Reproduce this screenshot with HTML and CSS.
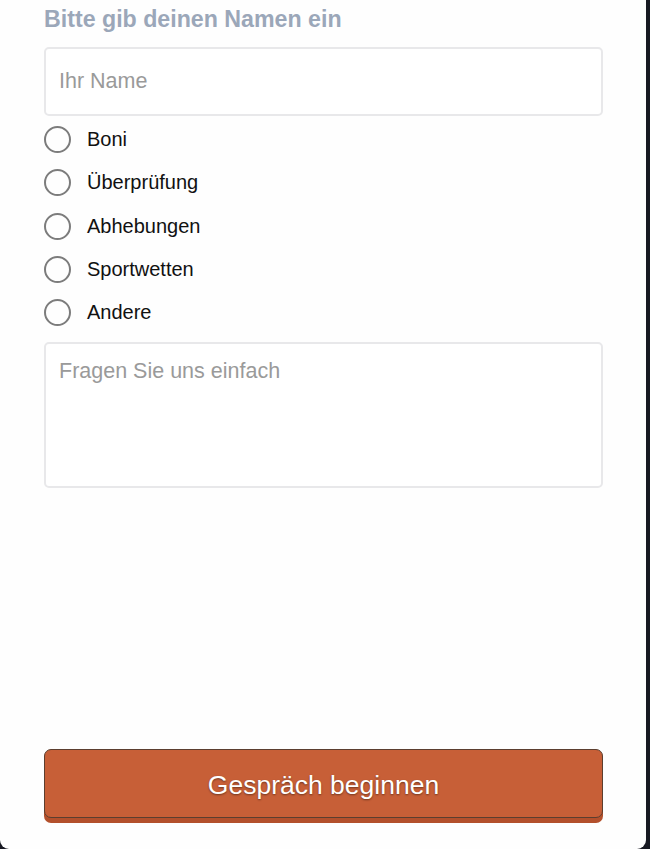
FILE: index.html
```html
<!DOCTYPE html>
<html lang="de">
<head>
<meta charset="utf-8">
<link rel="stylesheet" href="styles.css">
</head>
<body>
<div class="panel">
  <h2 class="title">Bitte gib deinen Namen ein</h2>
  <div class="field name-field"><span class="placeholder">Ihr Name</span></div>
  <ul class="options">
    <li class="option"><span class="radio"></span><span class="label">Boni</span></li>
    <li class="option"><span class="radio"></span><span class="label">Überprüfung</span></li>
    <li class="option"><span class="radio"></span><span class="label">Abhebungen</span></li>
    <li class="option"><span class="radio"></span><span class="label">Sportwetten</span></li>
    <li class="option"><span class="radio"></span><span class="label">Andere</span></li>
  </ul>
  <div class="field message-field"><span class="placeholder">Fragen Sie uns einfach</span></div>
  <button class="start">Gespräch beginnen</button>
</div>
</body>
</html>
```
FILE: styles.css
```css
html, body {
  margin: 0;
  padding: 0;
  height: 100%;
}
body {
  background: #171922;
  font-family: "Liberation Sans", Arial, sans-serif;
}
.panel {
  box-sizing: border-box;
  width: 646px;
  height: 849px;
  background: #fefefe;
  border-radius: 0 0 9px 9px;
  padding: 5px 43px 0 44px;
  display: flex;
  flex-direction: column;
}
.title {
  margin: 0;
  font-size: 23.2px;
  font-weight: bold;
  color: #9ba7b9;
  line-height: 28px;
}
.field {
  box-sizing: border-box;
  border: 2px solid #e8e8ea;
  border-radius: 5px;
  background: #fff;
  padding: 0 13px;
}
.name-field {
  margin-top: 14px;
  height: 69px;
  display: flex;
  align-items: center;
}
.placeholder {
  font-size: 21.5px;
  color: #9a9a9a;
}
.options {
  list-style: none;
  margin: 9.5px 0 0;
  padding: 0;
  display: flex;
  flex-direction: column;
  gap: 15.3px;
}
.option {
  display: flex;
  align-items: center;
  height: 28px;
}
.radio {
  box-sizing: border-box;
  width: 27px;
  height: 27px;
  border: 2px solid #7c7c7c;
  border-radius: 50%;
  margin-right: 16px;
}
.label {
  font-size: 20px;
  color: #111;
}
.message-field {
  margin-top: 15.5px;
  height: 146px;
  padding-top: 15px;
}
.start {
  margin-top: auto;
  margin-bottom: 31px;
  height: 69px;
  width: 100%;
  background: #c75f37;
  border: 1px solid #5b3e2f;
  border-radius: 7px;
  box-shadow: 0 5px 0 #b3502c;
  color: #fff;
  font-family: "Liberation Sans", Arial, sans-serif;
  font-size: 26.5px;
  text-shadow: 0 1px 2px rgba(0,0,0,0.45);
  padding: 4px 0 0;
}
```
